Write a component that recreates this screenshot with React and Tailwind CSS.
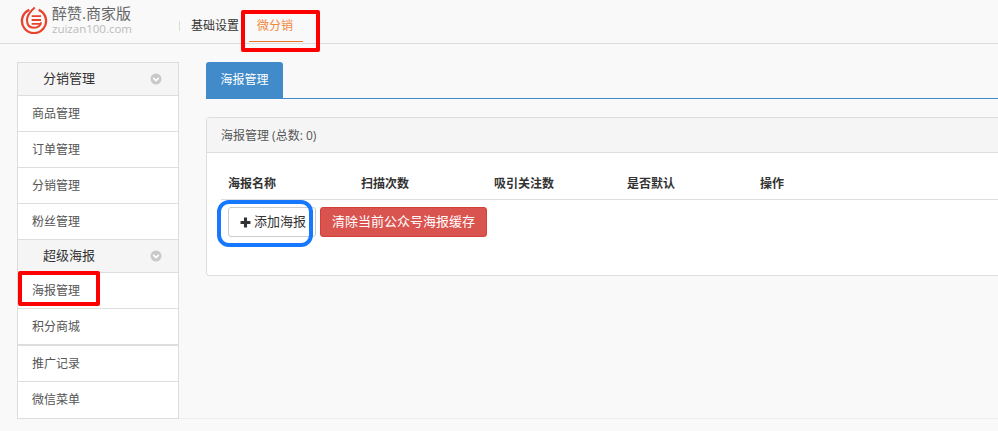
import React from 'react';

const FONT = '"Open Sans", "Liberation Sans", "Noto Sans CJK SC", sans-serif';
const COLUMNS = ['海报名称', '扫描次数', '吸引关注数', '是否默认', '操作'];

function Logo() {
  return (
    <div className="flex items-start w-[160px]">
      <svg width="28" height="28" viewBox="0 0 36 36" className="shrink-0 mt-[1px]" fill="none" stroke="#e8432e">
        <path d="M12 5 A 15.5 15.5 0 1 0 24 5" strokeWidth="3" />
        <path d="M19 2 C 12 8 9 13 9 18 C 9 25 13 28 18 28 C 23 28 27 25 27 21" strokeWidth="2.6" />
        <path d="M15 13 H27 M15 18 H27 M15 23 H27" strokeWidth="2.4" />
      </svg>
      <div className="ml-[4px]">
        <div className="text-[15px] leading-[16px] text-[#666] whitespace-nowrap">醉赞.商家版</div>
        <div className="mt-[2px] text-[11.5px] leading-[12px] text-[#bbb] whitespace-nowrap">zuizan100.com</div>
      </div>
    </div>
  );
}

function Chevron() {
  return (
    <svg width="12" height="12" viewBox="0 0 12 12">
      <circle cx="6" cy="6" r="5.5" fill="#c9c9c9" />
      <path d="M3.2 4.8 L6 7.6 L8.8 4.8" fill="none" stroke="#fff" strokeWidth="1.7" />
    </svg>
  );
}

function GroupTitle({ children }) {
  return (
    <div className="h-[33px] flex items-center justify-between pl-[25px] pr-[16px] bg-[#f5f5f5] border-b border-[#ddd] text-[13px] text-[#333]">
      <span>{children}</span>
      <Chevron />
    </div>
  );
}

function NavItem({ children, last }) {
  return (
    <div className={`h-[36px] flex items-center pl-[14px] bg-white text-[12px] text-[#555] ${last ? '' : 'border-b border-[#ddd]'}`}>
      {children}
    </div>
  );
}

export default function App() {
  return (
    <div className="w-[998px] h-[431px] overflow-hidden bg-[#f9f9f9] relative" style={{ fontFamily: FONT }}>
      <header className="h-[44px] border-b border-[#ddd] flex pl-[20px]">
        <div className="pt-[5px]"><Logo /></div>
        <nav className="flex items-start">
          <div className="mt-[21px] w-px h-[10px] bg-[#cfe3cf] mr-[11px] -ml-[1px]" />
          <div className="mt-[17px] text-[12px] leading-[18px] text-[#333] w-[57px]">基础设置</div>
          <div className="ml-[1px] w-[54px] h-[42px] border-b border-[#e8762d] pt-[17px] pr-[2px] text-center text-[12px] leading-[18px] text-[#f0883e]">微分销</div>
        </nav>
      </header>

      <div className="flex items-start pt-[18px] pl-[17px]">
        <aside className="w-[162px] shrink-0 border border-[#ddd]">
          <GroupTitle>分销管理</GroupTitle>
          <NavItem>商品管理</NavItem>
          <NavItem>订单管理</NavItem>
          <NavItem>分销管理</NavItem>
          <NavItem>粉丝管理</NavItem>
          <GroupTitle>超级海报</GroupTitle>
          <NavItem>海报管理</NavItem>
          <div className="h-[35px] flex items-center pl-[14px] bg-white text-[12px] text-[#555]">积分商城</div>
          <div className="h-[2px] bg-[#ddd]" />
          <NavItem>推广记录</NavItem>
          <NavItem last>微信菜单</NavItem>
        </aside>

        <main className="ml-[27px] w-[830px] shrink-0">
          <div className="h-[37px] border-b border-[#428bca]">
            <div className="w-[77px] h-[36px] bg-[#428bca] rounded-t-[3px] flex items-center justify-center text-[12px] text-white">海报管理</div>
          </div>

          <section className="mt-[18px] h-[159px] bg-white border border-[#ddd] rounded-[3px]">
            <div className="h-[35px] pt-px bg-[#f5f5f5] border-b border-[#ddd] flex items-center pl-[14px] text-[12px] text-[#555]">
              海报管理 (总数: 0)
            </div>
            <div className="px-[14px] pt-[20px]">
              <div className="h-[27px] flex pl-[7px] border-b border-[#ddd] text-[12px] font-bold text-[#333] leading-[22px]">
                {COLUMNS.map((c) => <div key={c} className="w-[133px]">{c}</div>)}
              </div>
              <div className="flex pl-[7px] pt-[7px] gap-[4px]">
                <button className="w-[88px] h-[30px] flex items-center pl-[11px] bg-white border border-[#ccc] rounded-[3px] text-[13px] text-[#333]">
                  <svg width="11" height="11" viewBox="0 0 10 10" className="mr-[3px] shrink-0" fill="#333">
                    <path d="M3.6 0.5 H6.4 V3.6 H9.5 V6.4 H6.4 V9.5 H3.6 V6.4 H0.5 V3.6 H3.6 Z" />
                  </svg>
                  添加海报
                </button>
                <button className="w-[167px] h-[30px] bg-[#d9534f] border border-[#d43f3a] rounded-[3px] text-[13px] text-white">清除当前公众号海报缓存</button>
              </div>
            </div>
          </section>
        </main>
      </div>

      <div className="absolute border-t border-[#eee] left-[179px] right-0 top-[418px]" />

      {/* annotations drawn over the screenshot */}
      <div className="absolute left-[241px] top-[10px] w-[79px] h-[42px] border-[4px] border-[#ff0000] rounded-[2px]" />
      <div className="absolute left-[18px] top-[271px] w-[82px] h-[35px] border-[4px] border-[#ff0000] rounded-[2px]" />
      <div className="absolute left-[217px] top-[200px] w-[96px] h-[47px] border-[4px] border-[#1677ff] rounded-[12px]" />
    </div>
  );
}
